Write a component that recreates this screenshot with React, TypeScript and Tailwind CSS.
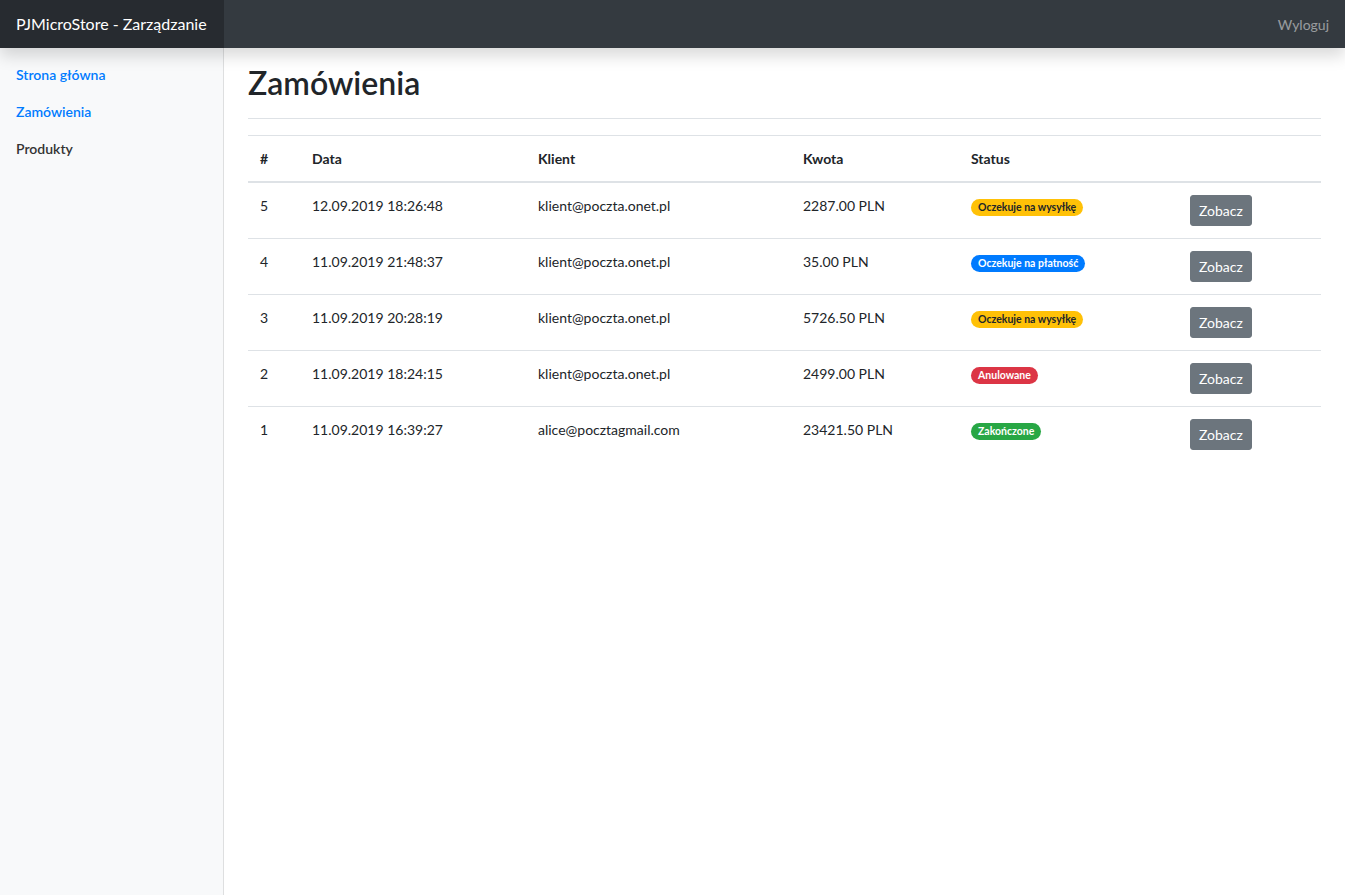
import React from "react";

type Row = { id: number; date: string; client: string; amount: string; status: string; kind: "warning" | "primary" | "danger" | "success" };

const rows: Row[] = [
  { id: 5, date: "12.09.2019 18:26:48", client: "klient@poczta.onet.pl", amount: "2287.00 PLN", status: "Oczekuje na wysyłkę", kind: "warning" },
  { id: 4, date: "11.09.2019 21:48:37", client: "klient@poczta.onet.pl", amount: "35.00 PLN", status: "Oczekuje na płatność", kind: "primary" },
  { id: 3, date: "11.09.2019 20:28:19", client: "klient@poczta.onet.pl", amount: "5726.50 PLN", status: "Oczekuje na wysyłkę", kind: "warning" },
  { id: 2, date: "11.09.2019 18:24:15", client: "klient@poczta.onet.pl", amount: "2499.00 PLN", status: "Anulowane", kind: "danger" },
  { id: 1, date: "11.09.2019 16:39:27", client: "alice@pocztagmail.com", amount: "23421.50 PLN", status: "Zakończone", kind: "success" },
];

const badgeClass: Record<Row["kind"], string> = {
  warning: "bg-[#ffc107] text-[#212529]",
  primary: "bg-[#007bff] text-white",
  danger: "bg-[#dc3545] text-white",
  success: "bg-[#28a745] text-white",
};

export default function App() {
  return (
    <div
      className="flex h-[895px] flex-col overflow-hidden bg-white text-[14px] leading-[1.5] text-[#212529]"
      style={{ fontFamily: 'Lato, "Open Sans", sans-serif' }}
    >
      <header className="relative z-10 flex h-12 shrink-0 items-center bg-[#343a40] shadow-[0_8px_16px_rgba(0,0,0,0.15)]">
        <div className="flex h-12 w-[224px] shrink-0 items-center whitespace-nowrap bg-[#272b30] px-4 text-[16px] text-white">
          PJMicroStore - Zarządzanie
        </div>
        <div className="flex-1" />
        <a className="px-4 text-[14px] text-white/50">Wyloguj</a>
      </header>
      <div className="flex min-h-0 flex-1">
        <aside className="w-[224px] shrink-0 bg-[#f8f9fa] pt-2 shadow-[inset_-1px_0_0_rgba(0,0,0,0.1)]">
          <nav className="flex flex-col font-semibold">
            <a className="px-4 py-2 text-[#007bff]">Strona główna</a>
            <a className="px-4 py-2 text-[#007bff]">Zamówienia</a>
            <a className="px-4 py-2 text-[#333]">Produkty</a>
          </nav>
        </aside>
        <main className="flex-1 px-6">
          <div className="mb-4 border-b border-[#dee2e6] pt-4 pb-2">
            <h1 className="mb-2 text-[32px] font-semibold leading-[1.2]">Zamówienia</h1>
          </div>
          <table className="w-full table-fixed border-collapse">
            <colgroup>
              <col className="w-[52px]" />
              <col className="w-[226px]" />
              <col className="w-[265px]" />
              <col className="w-[168px]" />
              <col className="w-[219px]" />
              <col />
            </colgroup>
            <thead>
              <tr>
                <th className="border-t border-b-2 border-[#dee2e6] p-3 text-left font-bold">#</th>
                <th className="border-t border-b-2 border-[#dee2e6] p-3 text-left font-bold">Data</th>
                <th className="border-t border-b-2 border-[#dee2e6] p-3 text-left font-bold">Klient</th>
                <th className="border-t border-b-2 border-[#dee2e6] p-3 text-left font-bold">Kwota</th>
                <th className="border-t border-b-2 border-[#dee2e6] p-3 text-left font-bold">Status</th>
                <th className="border-t border-b-2 border-[#dee2e6] p-3 text-left font-bold"></th>
              </tr>
            </thead>
            <tbody>
              {rows.map((r, i) => (
                <tr key={r.id}>
                  <td className={`p-3 align-top ${i > 0 ? "border-t border-[#dee2e6]" : ""}`}>{r.id}</td>
                  <td className={`p-3 align-top ${i > 0 ? "border-t border-[#dee2e6]" : ""}`}>{r.date}</td>
                  <td className={`p-3 align-top ${i > 0 ? "border-t border-[#dee2e6]" : ""}`}>{r.client}</td>
                  <td className={`p-3 align-top ${i > 0 ? "border-t border-[#dee2e6]" : ""}`}>{r.amount}</td>
                  <td className={`p-3 align-top ${i > 0 ? "border-t border-[#dee2e6]" : ""}`}>
                    <span
                      className={`inline-block rounded-full px-[7px] py-[3px] align-baseline text-[10.5px] font-bold leading-none ${badgeClass[r.kind]}`}
                    >
                      {r.status}
                    </span>
                  </td>
                  <td className={`p-3 align-top ${i > 0 ? "border-t border-[#dee2e6]" : ""}`}>
                    <button className="rounded-[3px] border border-[#6c757d] bg-[#6c757d] px-2 py-1 text-[14px] leading-[1.5] text-white">
                      Zobacz
                    </button>
                  </td>
                </tr>
              ))}
            </tbody>
          </table>
        </main>
      </div>
    </div>
  );
}
